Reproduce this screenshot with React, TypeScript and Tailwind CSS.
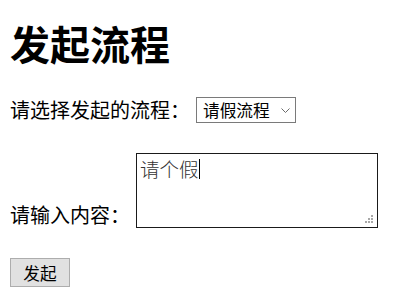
// Start-process form: pick a workflow, type content, submit.

export default function App() {
  return (
    <div className="px-[10px] text-black font-['Noto_Sans_CJK_SC','Microsoft_YaHei',sans-serif]">
      <h1 className="pt-[19px] text-[40px] font-bold leading-[48px]">发起流程</h1>

      <div className="mt-[30px] flex h-[26px] items-center">
        <span className="text-[20px] leading-[26px]">请选择发起的流程：</span>
        <div className="relative ml-[6px]">
          <select
            defaultValue="leave"
            className="h-[26px] w-[100px] appearance-none border border-[#7a7a7a] bg-white pl-[6px] text-[16.7px] leading-[24px] outline-none"
          >
            <option value="leave">请假流程</option>
          </select>
          <svg
            className="pointer-events-none absolute right-[6px] top-[11px]"
            width="9"
            height="5"
            viewBox="0 0 9 5"
          >
            <path d="M0.5 0.5 L4.5 4.5 L8.5 0.5" fill="none" stroke="#6b6b6b" strokeWidth="1" />
          </svg>
        </div>
      </div>

      <div className="mt-[30px] flex items-end">
        <span className="text-[20px] leading-[26px]">请输入内容：</span>
        <div className="relative ml-[6px]">
          <textarea
            readOnly
            defaultValue="请个假"
            className="block h-[75px] w-[242px] resize-none border border-[#1a1a1a] bg-white px-[3px] pt-[1px] text-[19.5px] font-light leading-[28px] text-[#333] outline-none"
          />
          <span className="absolute left-[63px] top-[6px] h-[20px] w-px bg-black" />
          <svg
            className="pointer-events-none absolute bottom-[4px] right-[4px]"
            width="9"
            height="9"
            viewBox="0 0 9 9"
          >
            <g fill="#a8a8a8">
              <rect x="6" y="0" width="2" height="2" />
              <rect x="3" y="3" width="2" height="2" />
              <rect x="6" y="3" width="2" height="2" />
              <rect x="0" y="6" width="2" height="2" />
              <rect x="3" y="6" width="2" height="2" />
              <rect x="6" y="6" width="2" height="2" />
            </g>
          </svg>
        </div>
      </div>

      <button className="mt-[30px] h-[29px] w-[60px] border border-[#adadad] bg-[#e1e1e1] text-[16.7px] leading-[26px]">
        发起
      </button>
    </div>
  );
}
